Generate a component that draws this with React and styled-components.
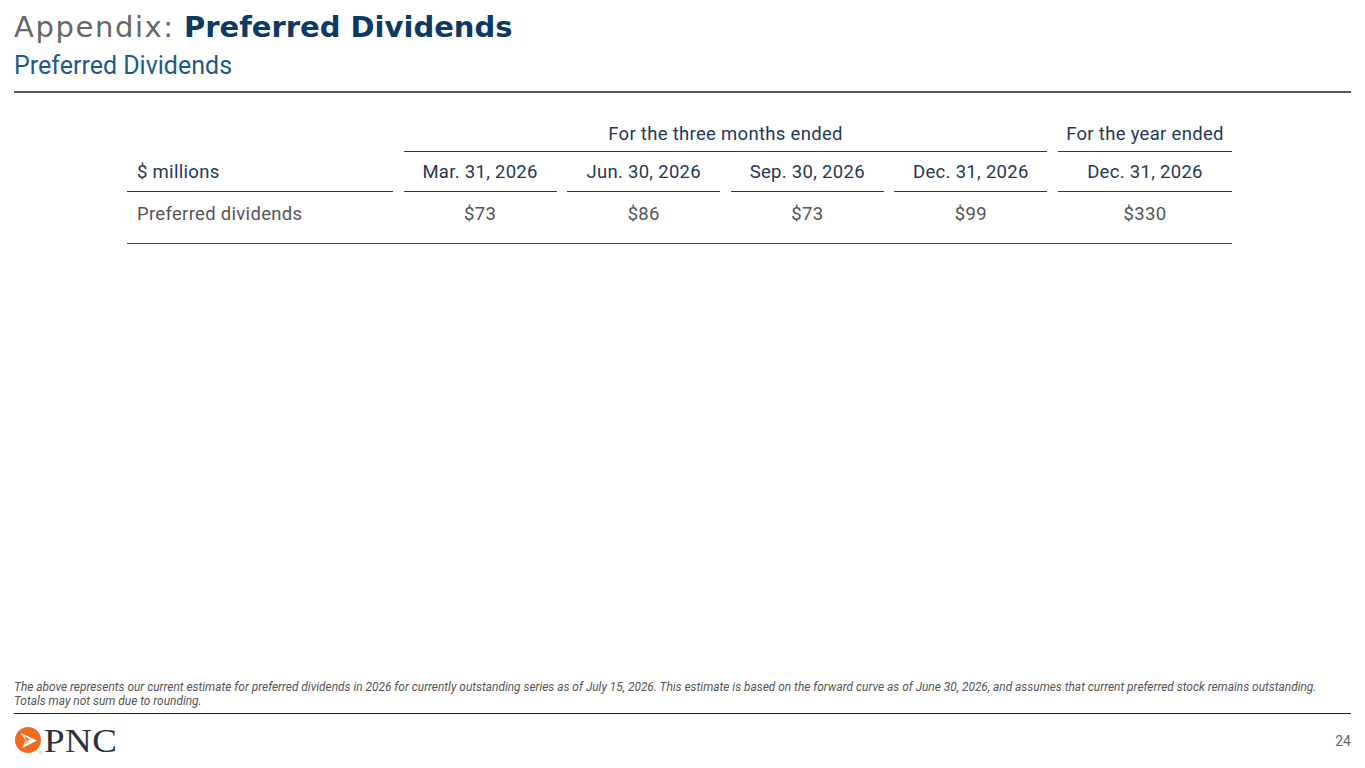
import React from "react";
import styled, { createGlobalStyle } from "styled-components";

const Global = createGlobalStyle`
  html, body { margin: 0; padding: 0; background: #fff; }
  body { font-family: Roboto, "Liberation Sans", sans-serif; }
`;

const Page = styled.div`
  width: 1365px;
  height: 768px;
  display: flex;
  flex-direction: column;
  box-sizing: border-box;
  padding: 0 14px;
  overflow: hidden;
`;

const Header = styled.header`
  padding-top: 8px;
  border-bottom: 2px solid #5a5a5a;
  padding-bottom: 11px;
`;

const Title = styled.h1`
  margin: 0;
  font-family: "DejaVu Sans", "Open Sans", sans-serif;
  font-size: 29px;
  line-height: 38px;
  font-weight: 400;
  color: #666;
`;

const TitleLight = styled.span`
  letter-spacing: 1.6px;
`;

const TitleBold = styled.span`
  font-weight: 700;
  color: #0b3a66;
`;

const Subtitle = styled.h2`
  margin: 5px 0 0;
  font-family: Roboto, sans-serif;
  font-size: 25px;
  line-height: 29px;
  font-weight: 400;
  color: #1c5a8a;
  letter-spacing: 0;
`;

const Main = styled.main`
  flex: 1;
  padding: 26px 0 0 113px;
  display: flex;
  flex-direction: column;
`;

const Row = styled.div`
  display: grid;
  grid-template-columns: 266px repeat(4, 153px) 174px;
  column-gap: 10.6px;
  width: 1105px;
  font-size: 18.5px;
  letter-spacing: 0.3px;
  border-bottom: ${(p) => (p.$line ? "1.5px solid #3a5068" : "none")};
`;

const Cell = styled.div`
  display: flex;
  align-items: center;
  justify-content: ${(p) => (p.$left ? "flex-start" : "center")};
  padding-left: ${(p) => (p.$left ? "10px" : "0")};
  padding-bottom: ${(p) => p.$pb || 0}px;
  height: ${(p) => p.$h}px;
  box-sizing: border-box;
  color: ${(p) => (p.$muted ? "#555" : "#1f3a55")};
  border-bottom: ${(p) => (p.$line ? "1.5px solid #1f3a55" : "none")};
  grid-column: ${(p) => p.$span || "auto"};
`;

const Footer = styled.footer`
  display: flex;
  flex-direction: column;
`;

const Note = styled.p`
  margin: 0;
  font-size: 11.9px;
  line-height: 14px;
  font-style: italic;
  color: #555;
  padding-bottom: 5px;
  border-bottom: 1.5px solid #222;
`;

const Bottom = styled.div`
  display: flex;
  align-items: center;
  justify-content: space-between;
  height: 54px;
`;

const Logo = styled.div`
  display: flex;
  align-items: center;
  gap: 1px;
  margin-top: -1px;
`;

const LogoText = styled.span`
  font-family: "Liberation Serif", serif;
  font-size: 33px;
  line-height: 30px;
  color: #2c3340;
  letter-spacing: 0.5px;
  transform: scaleX(1.12);
  transform-origin: left center;
`;

const PageNum = styled.span`
  font-size: 14px;
  color: #666;
`;

function PncMark() {
  return (
    <svg width="29" height="29" viewBox="0 0 29 29">
      <circle cx="14" cy="14" r="13" fill="#ef6b1f" />
      <path d="M6.5 7 L23 14.5 L8.5 22 L11.5 14 Z" fill="#fff" />
      <path d="M10.5 9.8 L16.5 14.3 L11.8 14 Z" fill="#ef6b1f" />
      <path d="M11.8 14 L16.5 14.3 L10.6 19.3 Z" fill="#f7b68e" />
      <circle cx="26.5" cy="26.5" r="1.2" fill="none" stroke="#ef6b1f" strokeWidth="0.5" />
    </svg>
  );
}

export default function App() {
  const dates = ["Mar. 31, 2026", "Jun. 30, 2026", "Sep. 30, 2026", "Dec. 31, 2026", "Dec. 31, 2026"];
  const values = ["$73", "$86", "$73", "$99", "$330"];
  return (
    <>
      <Global />
      <Page>
        <Header>
          <Title>
            <TitleLight>Appendix:</TitleLight> <TitleBold>Preferred Dividends</TitleBold>
          </Title>
          <Subtitle>Preferred Dividends</Subtitle>
        </Header>
        <Main>
          <Row>
            <Cell $h={33} />
            <Cell $h={33} $pb={2} $line $span="2 / 6">For the three months ended</Cell>
            <Cell $h={33} $pb={2} $line>For the year ended</Cell>
          </Row>
          <Row>
            <Cell $line $left $h={40}>$ millions</Cell>
            {dates.map((d, i) => (
              <Cell key={i} $line $h={40}>{d}</Cell>
            ))}
          </Row>
          <Row $line>
            <Cell $left $muted $h={51} $pb={8}>Preferred dividends</Cell>
            {values.map((v, i) => (
              <Cell key={i} $muted $h={51} $pb={8}>{v}</Cell>
            ))}
          </Row>
        </Main>
        <Footer>
          <Note>
            The above represents our current estimate for preferred dividends in 2026 for currently outstanding series as of July 15, 2026. This estimate is based on the forward curve as of June 30, 2026, and assumes that current preferred stock remains outstanding.
            <br />
            Totals may not sum due to rounding.
          </Note>
          <Bottom>
            <Logo>
              <PncMark />
              <LogoText>PNC</LogoText>
            </Logo>
            <PageNum>24</PageNum>
          </Bottom>
        </Footer>
      </Page>
    </>
  );
}
